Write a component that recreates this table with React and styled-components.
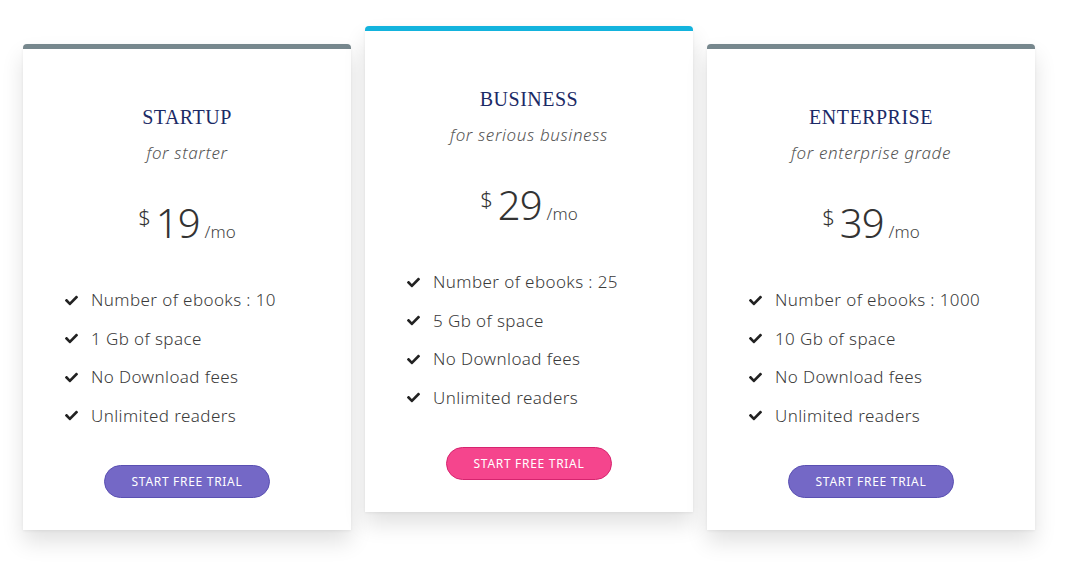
import React from "react"
import styled, { createGlobalStyle } from "styled-components"
import { FaCheck } from "react-icons/fa"

const GlobalStyle = createGlobalStyle`
  html, body {
    margin: 0;
    padding: 0;
    background: #fff;
  }
  body {
    font-family: "Noto Sans", "Open Sans", sans-serif;
  }
`

const plans = [
  {
    name: "STARTUP",
    tagline: "for starter",
    price: 19,
    features: ["Number of ebooks : 10", "1 Gb of space", "No Download fees", "Unlimited readers"],
    featured: false,
  },
  {
    name: "BUSINESS",
    tagline: "for serious business",
    price: 29,
    features: ["Number of ebooks : 25", "5 Gb of space", "No Download fees", "Unlimited readers"],
    featured: true,
  },
  {
    name: "ENTERPRISE",
    tagline: "for enterprise grade",
    price: 39,
    features: ["Number of ebooks : 1000", "10 Gb of space", "No Download fees", "Unlimited readers"],
    featured: false,
  },
]

const Page = styled.div`
  display: flex;
  align-items: flex-start;
  gap: 14px;
  padding: 26px 0 0 23px;
  height: 568px;
  box-sizing: border-box;
`

const Card = styled.div`
  width: 328px;
  box-sizing: border-box;
  margin-top: ${(p) => (p.$featured ? "0" : "18px")};
  background: #fff;
  border-top: 5px solid ${(p) => (p.$featured ? "#13b3dd" : "#76878d")};
  border-radius: 4px 4px 0 0;
  box-shadow: 0 12px 22px rgba(0, 0, 0, 0.12), 0 1px 3px rgba(0, 0, 0, 0.06);
  padding: 56px 0 32px;
  display: flex;
  flex-direction: column;
  align-items: center;
`

const Title = styled.h2`
  margin: 0;
  font-family: "Liberation Serif", "DejaVu Serif", serif;
  font-weight: 400;
  font-size: 20px;
  line-height: 24px;
  letter-spacing: 0.5px;
  color: #1b2a66;
`

const Tagline = styled.div`
  margin-top: 12px;
  font-style: italic;
  font-weight: 300;
  font-size: 17px;
  line-height: 24px;
  letter-spacing: 0.6px;
  color: #555;
`

const Price = styled.div`
  margin-top: 32px;
  display: flex;
  align-items: baseline;
  color: #333;
  height: 52px;
`

const Currency = styled.span`
  font-size: 22px;
  font-weight: 300;
  align-self: flex-start;
  margin-top: 4px;
  margin-right: 5px;
`

const Amount = styled.span`
  font-size: 40px;
  font-weight: 300;
  line-height: 52px;
  letter-spacing: -1px;
`

const Period = styled.span`
  font-size: 17px;
  font-weight: 300;
  margin-left: 5px;
  color: #444;
`

const Features = styled.ul`
  list-style: none;
  margin: 39px 0 0;
  padding: 0 0 0 42px;
  align-self: stretch;
  display: flex;
  flex-direction: column;
  gap: 14.5px;
`

const Feature = styled.li`
  display: flex;
  align-items: center;
  gap: 13px;
  font-size: 17px;
  line-height: 24px;
  font-weight: 300;
  letter-spacing: 0.4px;
  color: #3a3a3a;

  svg {
    font-size: 13px;
    color: #222;
    flex-shrink: 0;
  }
`

const TrialButton = styled.button`
  margin-top: 37px;
  width: 166px;
  height: 33px;
  border-radius: 17px;
  border: 1px solid ${(p) => (p.$featured ? "#d6246f" : "#5a50b2")};
  background: ${(p) => (p.$featured ? "#f5458d" : "#7468c6")};
  color: #fff;
  font-family: "Noto Sans", "Open Sans", sans-serif;
  font-size: 12px;
  letter-spacing: 0.7px;
  cursor: pointer;
`

const PlanCard = ({ plan }) => (
  <Card $featured={plan.featured}>
    <Title>{plan.name}</Title>
    <Tagline>{plan.tagline}</Tagline>
    <Price>
      <Currency>$</Currency>
      <Amount>{plan.price}</Amount>
      <Period>/mo</Period>
    </Price>
    <Features>
      {plan.features.map((f) => (
        <Feature key={f}>
          <FaCheck />
          {f}
        </Feature>
      ))}
    </Features>
    <TrialButton $featured={plan.featured}>START FREE TRIAL</TrialButton>
  </Card>
)

const App = () => (
  <>
    <GlobalStyle />
    <Page>
      {plans.map((p) => (
        <PlanCard key={p.name} plan={p} />
      ))}
    </Page>
  </>
)

export default App
